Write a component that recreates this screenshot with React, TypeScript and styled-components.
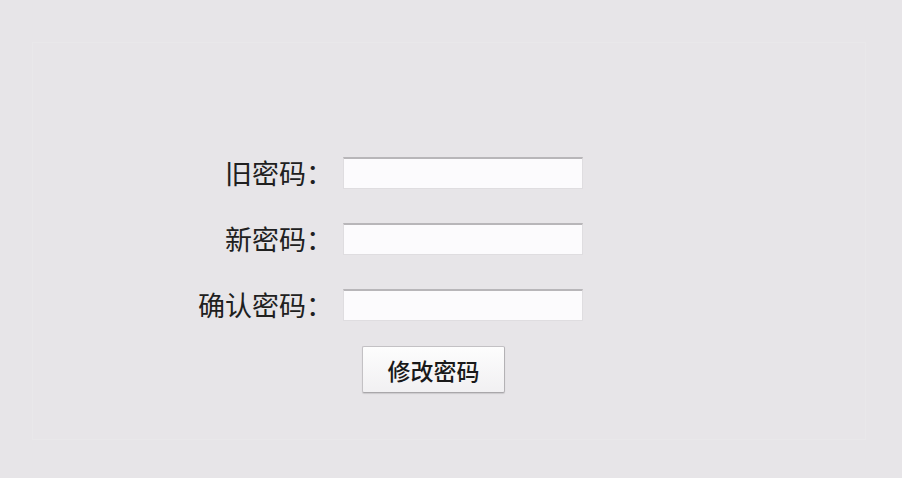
import React from "react";
import styled, { createGlobalStyle } from "styled-components";

const Global = createGlobalStyle`
  html, body {
    margin: 0;
    padding: 0;
    background: #e7e5e8;
  }
  body {
    font-family: "Noto Sans CJK SC", "Noto Sans", sans-serif;
    color: #1e1e1e;
  }
`;

const Page = styled.div`
  width: 902px;
  height: 478px;
  box-sizing: border-box;
  padding: 42px 36px 38px 32px;
  background: #e7e5e8;
`;

const Panel = styled.div`
  height: 100%;
  box-sizing: border-box;
  border: 1px solid #e9e8ea;
  padding: 114px 0 0 158px;
`;

const Form = styled.form`
  display: grid;
  grid-template-columns: 140px 240px;
  column-gap: 12px;
  row-gap: 34px;
  align-items: center;
  margin: 0;
`;

const Label = styled.label`
  justify-self: end;
  font-size: 27px;
  line-height: 32px;
  color: #202020;
  white-space: nowrap;
  margin-right: -2px;
`;

const Input = styled.input`
  box-sizing: border-box;
  width: 240px;
  height: 32px;
  margin: 0;
  padding: 0 6px;
  background: #fcfbfd;
  border: 1px solid #dfdde0;
  border-top: 2px solid #b8b6b9;
  border-radius: 0;
  outline: none;
  font-size: 16px;
`;

const ButtonCell = styled.div`
  grid-column: 2;
  margin-top: -9px;
  padding-left: 19px;
`;

const Button = styled.button`
  box-sizing: border-box;
  width: 143px;
  height: 47px;
  margin: 0;
  padding: 0;
  font-family: "Noto Sans CJK SC", "Noto Sans", sans-serif;
  font-size: 23px;
  font-weight: 500;
  color: #1a1a1a;
  background: linear-gradient(#fdfdfd, #f1f0f2);
  border: 1px solid #c3c1c4;
  border-bottom-color: #a9a7aa;
  border-right-color: #b4b2b5;
  border-radius: 2px;
  box-shadow: 0 1px 1px rgba(0, 0, 0, 0.12);
  cursor: pointer;
`;

export default function App() {
  return (
    <>
      <Global />
      <Page>
        <Panel>
          <Form onSubmit={(e) => e.preventDefault()}>
            <Label htmlFor="old">旧密码：</Label>
            <Input id="old" type="password" />
            <Label htmlFor="new">新密码：</Label>
            <Input id="new" type="password" />
            <Label htmlFor="confirm">确认密码：</Label>
            <Input id="confirm" type="password" />
            <ButtonCell>
              <Button type="submit">修改密码</Button>
            </ButtonCell>
          </Form>
        </Panel>
      </Page>
    </>
  );
}
